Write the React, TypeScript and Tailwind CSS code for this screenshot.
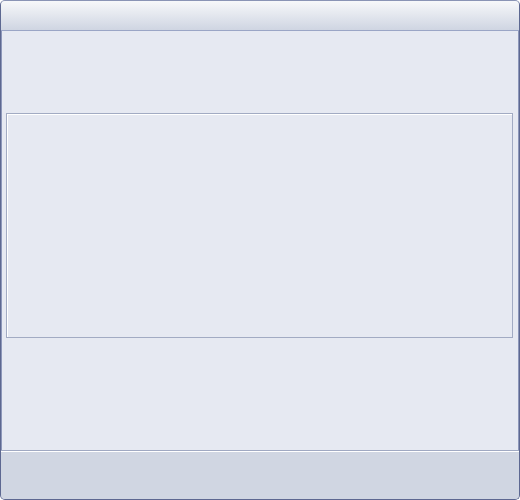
export default function App() {
  return (
    <div className="w-[520px] h-[500px] bg-white" style={{ fontFamily: '"Liberation Sans", Arial, sans-serif' }}>
      <div className="flex h-full w-full flex-col overflow-hidden rounded-[5px] border border-[#5d6891] border-t-[#8a94b5] bg-[#e6e9f2] shadow-[inset_1px_0_0_#8d97ba,inset_-1px_0_0_#8d97ba]">
        <div className="h-[30px] shrink-0 border-b border-[#9aa5c6] bg-gradient-to-b from-[#f7f8fa] to-[#cfd5e2]" />
        <div className="flex flex-1 flex-col pl-[5px] pr-[6px] pt-[82px]">
          <div className="h-[225px] w-full border border-[#a2abc3] shadow-[inset_1px_1px_0_#ffffff]" />
        </div>
        <div className="h-[49px] shrink-0 border-t border-[#a0a9c2] bg-[#d0d6e2] shadow-[inset_0_1px_0_#ffffff]" />
      </div>
    </div>
  )
}
